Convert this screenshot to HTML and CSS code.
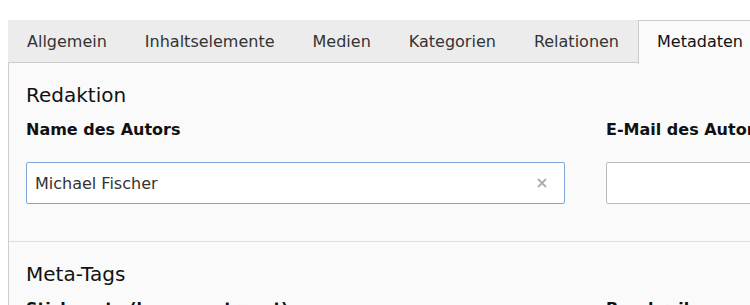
FILE: index.html
```html
<!DOCTYPE html>
<html lang="de">
<head>
    <meta charset="UTF-8">
    <meta name="viewport" content="width=device-width, initial-scale=1.0">
    <title>Seite bearbeiten</title>
    <link rel="stylesheet" href="styles.css">
</head>
<body>
    <div class="editor">
        <ul class="tabs">
            <li class="tab">Allgemein</li>
            <li class="tab">Inhaltselemente</li>
            <li class="tab">Medien</li>
            <li class="tab">Kategorien</li>
            <li class="tab">Relationen</li>
            <li class="tab active">Metadaten</li>
            <li class="tab">Ressourcen</li>
        </ul>

        <div class="panel">
            <section class="group">
                <h4>Redaktion</h4>
                <div class="row">
                    <div class="field">
                        <label for="author">Name des Autors</label>
                        <div class="input-wrap">
                            <input type="text" id="author" class="focused" value="Michael Fischer">
                            <span class="clear">
                                <svg width="10" height="10" viewBox="0 0 10 10">
                                    <path d="M1 1 L9 9 M9 1 L1 9" stroke="#adadad" stroke-width="1.8" fill="none"/>
                                </svg>
                            </span>
                        </div>
                    </div>
                    <div class="field">
                        <label for="email">E-Mail des Autors</label>
                        <div class="input-wrap">
                            <input type="text" id="email" value="">
                        </div>
                    </div>
                </div>
            </section>

            <section class="group">
                <h4>Meta-Tags</h4>
                <div class="row">
                    <div class="field">
                        <label for="keywords">Stichworte (kommagetrennt)</label>
                    </div>
                    <div class="field">
                        <label for="description">Beschreibung</label>
                    </div>
                </div>
            </section>
        </div>
    </div>
</body>
</html>
```

FILE: styles.css
```css
html, body {
    margin: 0;
    background: #ffffff;
    overflow: hidden;
}

body {
    font-family: "DejaVu Sans", Verdana, sans-serif;
    color: #1a1a1a;
    padding: 20px 0 0 8px;
}

.editor {
    width: 1200px;
}

.tabs {
    display: flex;
    list-style: none;
    margin: 0;
    padding: 0;
    background: #ececec;
    border-bottom: 1px solid #cccccc;
    height: 42px;
}

.tab {
    padding: 0 18px;
    font-size: 16px;
    line-height: 42px;
    color: #333333;
    border: 1px solid transparent;
    border-bottom: none;
    white-space: nowrap;
}

.tab.active {
    background: #fafafa;
    border-color: #cccccc;
    color: #111111;
    height: 43px;
    line-height: 41px;
}

.panel {
    background: #fafafa;
    border-left: 1px solid #cccccc;
}

.group {
    padding: 20px 17px 37px;
    border-bottom: 1px solid #dddddd;
}

.group h4 {
    margin: 0;
    font-size: 20px;
    font-weight: normal;
    line-height: 24px;
    color: #111111;
}

.row {
    display: grid;
    grid-template-columns: 539px 539px;
    column-gap: 41px;
}

.field label {
    display: block;
    margin-top: 13px;
    font-size: 16px;
    font-weight: bold;
    line-height: 20px;
    color: #111111;
    white-space: nowrap;
}

.input-wrap {
    position: relative;
    margin-top: 22px;
}

.input-wrap input {
    display: block;
    width: 100%;
    box-sizing: border-box;
    height: 42px;
    padding: 0 30px 0 8px;
    font-family: inherit;
    font-size: 16px;
    color: #333333;
    background: #ffffff;
    border: 1px solid #bbbbbb;
    border-radius: 2px;
    outline: none;
}

.input-wrap input.focused {
    border-color: #7fa6da;
}

.clear {
    position: absolute;
    right: 18px;
    top: 16px;
    width: 10px;
    height: 10px;
    line-height: 0;
}
```
